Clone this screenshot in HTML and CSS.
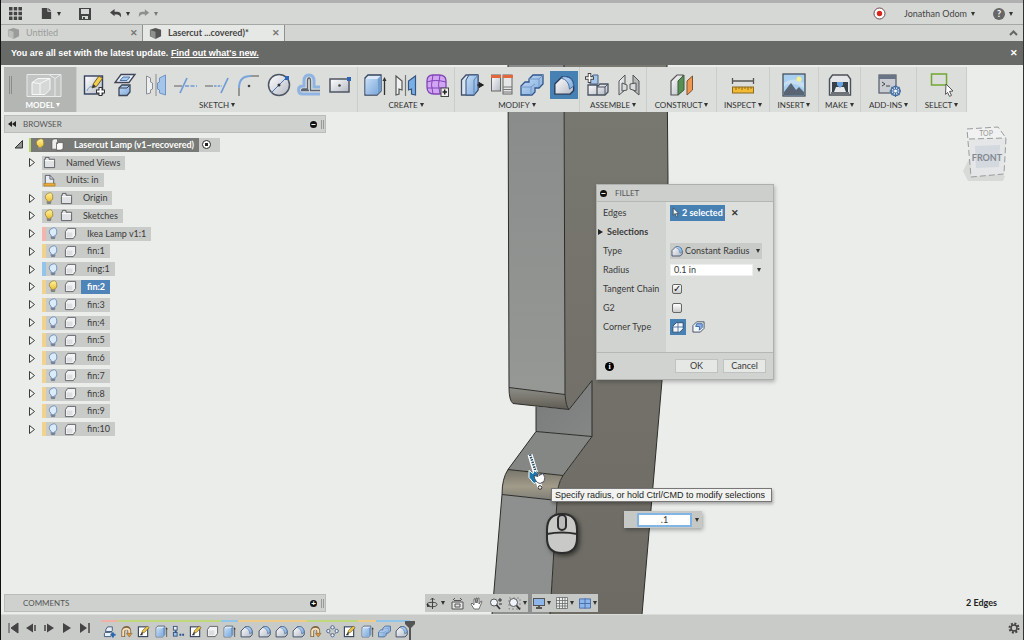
FILE: index.html
```
<!DOCTYPE html>
<html lang="en">
<head>
<meta charset="utf-8">
<title>Lasercut Lamp</title>
<link rel="stylesheet" href="styles.css">
</head>
<body>
<svg class="defs" aria-hidden="true">
<defs>
<linearGradient id="gb" x1="0" y1="0" x2="1" y2="1"><stop offset="0" stop-color="#c4dcf5"/><stop offset="1" stop-color="#7faadc"/></linearGradient>
<linearGradient id="gw" x1="0" y1="0" x2="1" y2="1"><stop offset="0" stop-color="#ffffff"/><stop offset="1" stop-color="#b4b9c4"/></linearGradient>
<linearGradient id="gy" x1="0" y1="0" x2="0" y2="1"><stop offset="0" stop-color="#fff3a0"/><stop offset="1" stop-color="#e9b820"/></linearGradient>
</defs>
<symbol id="i-sketch" viewBox="0 0 24 24"><rect x="2.500" y="3" width="18" height="18" fill="url(#gw)" stroke="#33415e" stroke-width="1.400"/><path d="M5 18q2-6 7-4" fill="none" stroke="#6f9fd6"/><path d="M10 15l1.500-4.500L17 3l3.500 2.500-6 8z" fill="#f2cf4a" stroke="#6b5a2e"/><path d="M10 15l1.500-4 2.500 2.500z" fill="#3c3c3c"/><path d="M18.500 14v9M14 18.500h9" stroke="#333" stroke-width="4"/><path d="M18.500 15v7M15 18.500h7" stroke="#fff" stroke-width="2"/></symbol>
<symbol id="i-loft" viewBox="0 0 24 24"><path d="M8 1.500h14l-6 8H2z" fill="#eef2f8" stroke="#3d4557" stroke-width="1.300"/><path d="M10 4h7l-3 3.500H7z" fill="#a9caee" stroke="#4a76ad"/><path d="M6 15l3-3h8v7l-3 3.500H6z" fill="url(#gb)" stroke="#3d4557" stroke-width="1.300"/><path d="M6 15h8l3-3" fill="none" stroke="#3d4557"/></symbol>
<symbol id="i-mirror" viewBox="0 0 24 24"><path d="M2.500 3l4 2v4l2 1v6l-2 1v3l-4 1z" fill="#eceef0" stroke="#8b8f94"/><path d="M12 1v22" stroke="#999" stroke-width="1.200"/><path d="M21.500 2l-6 3v4l-2 1v6l2 1v3l6 2z" fill="#a5c4e9" stroke="#6d94c4"/></symbol>
<symbol id="i-trim" viewBox="0 0 24 24"><path d="M0 13h8" stroke="#888" stroke-width="1.500"/><path d="M6 20L13 5" stroke="#6e9bd8" stroke-width="1.700"/><path d="M11 13h12" stroke="#6e9bd8" stroke-width="1.500" stroke-dasharray="4 1.500"/></symbol>
<symbol id="i-extend" viewBox="0 0 24 24"><path d="M0 13h8" stroke="#888" stroke-width="1.500"/><path d="M9 13h8" stroke="#6e9bd8" stroke-width="1.500" stroke-dasharray="2.500 1.200"/><path d="M16 20L23 5" stroke="#6e9bd8" stroke-width="1.700"/></symbol>
<symbol id="i-arc" viewBox="0 0 24 24"><path d="M3 23v-8" stroke="#777" stroke-width="1.400"/><path d="M3 15Q3 3 15 3" fill="none" stroke="#7aa5dd" stroke-width="2"/><path d="M15 3h8" stroke="#777" stroke-width="1.400"/><circle cx="13" cy="13" r="1.300" fill="#444"/></symbol>
<symbol id="i-circle" viewBox="0 0 24 24"><circle cx="12" cy="12" r="10.500" fill="url(#gw)" stroke="#4f5663" stroke-width="1.500"/><path d="M4 20L20 4" stroke="#4777b8"/><circle cx="12" cy="12" r="1.500" fill="#333"/><path d="M18 3h4v4h-4z" fill="#2d66b8"/></symbol>
<symbol id="i-offset" viewBox="0 0 24 24"><path d="M23 14h-6V8q0-6-5-6T7 8v5H6q-4.500 0-4.500 4T6 21h17" fill="none" stroke="#8fb4e2" stroke-width="3"/><path d="M23 17.500h-9.500V8q0-3-1.500-3t-1.500 3v8H6q-1.500 0-1.500 1.500H12" fill="none" stroke="#5b6370" stroke-width="1.300"/></symbol>
<symbol id="i-rect" viewBox="0 0 24 24"><rect x="2" y="6" width="19" height="13" fill="url(#gw)" stroke="#4f5663" stroke-width="1.500"/><circle cx="11.500" cy="12.500" r="1.300" fill="#444"/><path d="M19 4h4v4h-4z" fill="#2d66b8"/></symbol>
<symbol id="i-extrude" viewBox="0 0 24 24"><path d="M2 5l3-3h13v16l-4 4H2z" fill="#dce9f8" stroke="#34435e" stroke-width="1.300"/><path d="M2.500 6h12v15.500h-12z" fill="url(#gb)"/><path d="M14.500 6L18 2.500V18l-3.500 3.500z" fill="#6e9dd2"/><path d="M21.500 7v15" stroke="#333" stroke-width="1.300"/><path d="M19.500 8l2-4 2 4z" fill="#333"/></symbol>
<symbol id="i-sheet" viewBox="0 0 24 24"><path d="M2 3l6 5v9l-3-1v5l-3 1z" fill="#f1f2f3" stroke="#555" stroke-width="1.200"/><path d="M11.500 2v21" stroke="#777" stroke-width="1.200"/><path d="M21.500 3v19l-4-1v-5l-3 1V8z" fill="#79aee6" stroke="#35567e" stroke-width="1.200"/></symbol>
<symbol id="i-form" viewBox="0 0 24 24"><path d="M2 8q0-6 6-6h6q7 0 7 6v6q0 7-7 7H9q-7 0-7-7z" fill="#d2a4f4" stroke="#8045b4" stroke-width="1.300"/><path d="M2 9q8-3 19 0M2 15h19M8 2q-3 10 0 19M15 2q-3 10 0 19" fill="none" stroke="#8045b4"/><rect x="16" y="15" width="7.500" height="8.500" fill="#eee" stroke="#444"/><path d="M19.700 16.500v5M17.500 19h4.500" stroke="#222" stroke-width="1.500"/></symbol>
<symbol id="i-press" viewBox="0 0 24 24"><path d="M1.500 7L6 2h12v15l-4 5H1.500z" fill="#dbe6f3" stroke="#44516a" stroke-width="1.300"/><path d="M6 7l3-5h9v15l-4 5H6z" fill="url(#gb)" stroke="#34507a"/><path d="M14 7v15M14 7l4-5" stroke="#5d82b2"/><path d="M17 12h4M19 9.500l4.500 2.500-4.500 2.500z" fill="#222" stroke="#222"/></symbol>
<symbol id="i-param" viewBox="0 0 24 24"><rect x="1.500" y="2" width="9" height="16" fill="url(#gw)" stroke="#666"/><rect x="13" y="2" width="9" height="19" fill="#e5e6e7" stroke="#666"/><path d="M1 2h10v3H1zM13 2h10v3H13z" fill="#e2673c"/><path d="M13 14h9M13 16.500h9M13 19h9" stroke="#777"/></symbol>
<symbol id="i-combine" viewBox="0 0 24 24"><path d="M9 6l4-4h10v9l-4 4h-4v4l-3 3H1v-9l4-4h4z" fill="url(#gb)" stroke="#31568c" stroke-width="1.300"/><path d="M9 6h10l4-4M19 6v8M1 14h10l4-3M11 14v8" fill="none" stroke="#7297c6"/></symbol>
<symbol id="i-fillet" viewBox="0 0 24 24"><path d="M2 22V11l8-8h4q8 1 8.500 10v5l-4 4z" fill="url(#gw)" stroke="#293b58" stroke-width="1.500" stroke-linejoin="round"/><path d="M9 4.500L11 3h3q8 1 8.500 10L18 16.500Q17.500 6.500 9 4.500z" fill="url(#gb)" stroke="#3d6aa5"/></symbol>
<symbol id="i-newcomp" viewBox="0 0 24 24"><path d="M5 11V5l3-3h5v9z" fill="#a4c6ed" stroke="#4d617e"/><path d="M3 12h9v10H3zM12 14l3-3h8v8l-3 3h-8z" fill="url(#gw)" stroke="#4b5462" stroke-width="1.300"/><path d="M12 14h8v8M20 14l3-3" fill="none" stroke="#4b5462"/><path d="M4.500 0v10M0 5h9" stroke="#444" stroke-width="3.500"/><path d="M4.500 1v8M1 5h7" stroke="#fff" stroke-width="1.700"/></symbol>
<symbol id="i-joint" viewBox="0 0 24 24"><path d="M2 8l6-6v15l-6 5z" fill="url(#gw)" stroke="#555"/><path d="M22 8l-6-6v15l6 5z" fill="#b4b7ba" stroke="#555"/><path d="M5 10l5 2v5l-5 1zM19 10l-6 1v5l6 2z" fill="#d9dbdd" stroke="#555"/></symbol>
<symbol id="i-construct" viewBox="0 0 24 24"><path d="M1 8l6-6h6v14l-5 6H1z" fill="url(#gw)" stroke="#555" stroke-width="1.200"/><path d="M8 8l6-6v15l-6 5z" fill="#579052" stroke="#3d5c3a"/><path d="M17 8l5.500-5v14L17 22z" fill="#f29751" stroke="#7c5233"/></symbol>
<symbol id="i-inspect" viewBox="0 0 24 24"><path d="M1.500 5v6M22.500 5v6M2 8h20" stroke="#555" stroke-width="1.300"/><rect x="1.500" y="14" width="21" height="6" fill="#f2bb33" stroke="#8c6a21"/><path d="M5 14v3M8 14v2M11 14v3M14 14v2M17 14v3M20 14v2" stroke="#8c6a21"/></symbol>
<symbol id="i-insert" viewBox="0 0 24 24"><rect x="1" y="1" width="22" height="22" fill="#a9d0ef" stroke="#45505e" stroke-width="1.300"/><path d="M2 14q6-7 20 1v-5q-11-7-20 0z" fill="#dbeaf3" opacity=".6"/><path d="M2 19l7-9 5 7 3-3 5 5v3H2z" fill="#5a6574"/><circle cx="17" cy="6" r="2.500" fill="#f7f18d"/></symbol>
<symbol id="i-make" viewBox="0 0 24 24"><path d="M1.500 6l3-4h15l3 4v16h-21z" fill="#e4e6e8" stroke="#4c5158" stroke-width="1.400"/><path d="M4 9h16v10H4z" fill="#394149"/><path d="M6 19l2-5h8l2 5z" fill="#e6e8ea"/><path d="M9 9h6v3l-3 3-3-3z" fill="#6ba4e6"/><path d="M3 20h18" stroke="#6d7278" stroke-width="2"/></symbol>
<symbol id="i-addins" viewBox="0 0 24 24"><rect x="2" y="2" width="17" height="18" fill="#c9cdd3" stroke="#535a66" stroke-width="1.200"/><path d="M2 2h17v4H2z" fill="#687486"/><path d="M5 9l3 2-3 2M9 13h4" fill="none" stroke="#444"/><circle cx="18.500" cy="18" r="4.500" fill="#d7e5f6" stroke="#456e9f" stroke-width="1.500"/><path d="M18.500 12v12M12.500 18h12M14.500 14l8 8M22.500 14l-8 8" stroke="#456e9f" stroke-width="1.100"/><circle cx="18.500" cy="18" r="1.500" fill="#fff"/></symbol>
<symbol id="i-select" viewBox="0 0 24 24"><rect x="1.500" y="1" width="15" height="11" fill="none" stroke="#72a832" stroke-width="1.500"/><path d="M16 11l7 7-3.500.4 2 4-2 1-2-4-2 2z" fill="#fff" stroke="#555"/></symbol>
<symbol id="i-bulb" viewBox="0 0 12 14"><path d="M4 9Q1.500 7 2 4.500T6 1t4 3.500T8 9v3H4z" fill="url(#gy)" stroke="#997c2c" stroke-width=".8"/><path d="M4 10h4v3H4z" fill="#7e8287"/></symbol>
<symbol id="i-bulboff" viewBox="0 0 12 14"><path d="M4 9Q1.500 7 2 4.500T6 1t4 3.500T8 9v3H4z" fill="#dcebfa" stroke="#6287b8" stroke-width=".9"/><path d="M4 10h4v3H4z" fill="#76829a"/></symbol>
<symbol id="i-folder" viewBox="0 0 14 14"><path d="M1.500 12.500v-9h1v-2h4v2h6v9z" fill="#e0e2e4" stroke="#555b63"/><path d="M2 5h10" stroke="#fff"/></symbol>
<symbol id="i-body" viewBox="0 0 14 14"><path d="M1.500 5l2.500-3.500h8.500V9L10 12.500H1.500z" fill="#f1f2f3" stroke="#5d6268" stroke-linejoin="round"/><path d="M3 6h6v5H3z" fill="#dcdee0"/></symbol>
<symbol id="i-comp" viewBox="0 0 14 14"><path d="M1 3l2-2h4v4H6v7H1z" fill="#eee" stroke="#555" stroke-width=".7"/><path d="M6 7l2-2h5v6l-2 2H6z" fill="#fff" stroke="#555" stroke-width=".7"/></symbol>
<symbol id="i-units" viewBox="0 0 14 14"><path d="M2.500 12V1.500h5l4 4V12z" fill="#e9ecf0" stroke="#535c68"/><path d="M7.500 1.500v4h4" fill="none" stroke="#535c68"/><path d="M1 10h12v3H1z" fill="#e8a936" stroke="#9a6c1f" stroke-width=".6"/></symbol>
<symbol id="i-tri" viewBox="0 0 8 10"><path d="M1.500 1v8l5-4z" fill="#f3f3f3" stroke="#3b3b3b"/></symbol>
<symbol id="i-cube" viewBox="0 0 14 14"><path d="M1 3l6-2 6 2v7l-6 3-6-3z" fill="currentColor"/><path d="M1.500 3.300L7 5v8L1.500 10z" fill="#fff" opacity=".35"/></symbol>
<symbol id="i-cursor" viewBox="0 0 8 12"><path d="M1 1v8l2-2 1.500 4 1.500-.7L4.500 7H7z" fill="#eef3f8" stroke="#333" stroke-width=".7"/></symbol>
<symbol id="i-snake" viewBox="0 0 14 14"><path d="M3.500 13V6q1-3 3.500-3t3 3v3" fill="none" stroke="#7a633f" stroke-width="4"/><path d="M3.500 12V6q1-2 3.500-2t3 2v3" fill="none" stroke="#f6dfba" stroke-width="2.200"/><path d="M7 9h6l-3 4z" fill="#e59232" stroke="#7a633f" stroke-width=".6"/></symbol>
<symbol id="i-pattern" viewBox="0 0 14 14"><g fill="#e8eff7" stroke="#46648f"><circle cx="7" cy="2.500" r="1.800"/><circle cx="2.500" cy="6.500" r="1.800"/><circle cx="11.500" cy="6.500" r="1.800"/><circle cx="7" cy="11" r="1.800"/></g><path d="M4 4l1-1M9 3l1 1M4 9l1 1M10 9l-1 1" stroke="#444"/></symbol>
<symbol id="i-pen" viewBox="0 0 14 14"><rect x="1.500" y="2" width="10" height="10.500" fill="#fff" stroke="#34435e" stroke-width="1.200"/><path d="M5 9l1-3 5-5 2 2-5 5z" fill="#efc548" stroke="#685528" stroke-width=".7"/><path d="M3 11l3-4v4z" fill="#333"/></symbol>
<symbol id="i-rigid" viewBox="0 0 14 14"><rect x="1.500" y="1.500" width="4" height="4" fill="#e6eef8" stroke="#3c5577"/><rect x="1.500" y="8" width="4" height="4" fill="#9dc3ee" stroke="#3c5577"/><path d="M8 10.500h2M11 10.500h2M4 6v2" stroke="#24548e" stroke-width="2"/></symbol>
<symbol id="i-insertcomp" viewBox="0 0 14 14"><path d="M3 5l2-3h5v4L8 8H3zM1.500 9l2-2h6v4l-1 1.500h-7z" fill="#e9f0f8" stroke="#3c5577"/><path d="M8 10.500h5.500M10.700 8v5.500" stroke="#2468b0" stroke-width="2"/></symbol>
<symbol id="i-doc" viewBox="0 0 14 14"><path d="M2 1h6v4h4v8H2z" fill="#444"/><path d="M9 1l3 3H9z" fill="#444"/></symbol>
<symbol id="i-undo" viewBox="0 0 14 12"><path d="M1 5l5-4v3h3q4 0 4 4v2q-2-3-4-3H6v2z" fill="currentColor"/></symbol>
<symbol id="i-redo" viewBox="0 0 14 12"><path d="M13 5L8 1v3H5Q1 4 1 8v2q2-3 4-3h3v2z" fill="currentColor"/></symbol>
</svg>

<header class="topbar">
  <button class="tb" aria-label="Data panel"><svg width="13" height="13" viewBox="0 0 13 13"><path d="M0 0h3.500v3.500H0zM4.700 0h3.500v3.500H4.700zM9.400 0H13v3.500H9.400zM0 4.700h3.500v3.500H0zM4.700 4.700h3.500v3.500H4.700zM9.400 4.700H13v3.500H9.400zM0 9.400h3.500V13H0zM4.700 9.400h3.500V13H4.700zM9.400 9.400H13V13H9.400z" fill="#444"/></svg></button>
  <button class="tb" aria-label="File"><svg width="13" height="13"><use href="#i-doc"/></svg><i class="caret"></i></button>
  <button class="tb" aria-label="Save"><svg width="12" height="12" viewBox="0 0 12 12"><path d="M0 0h12v12H0z" fill="#444"/><path d="M2 1h8v5H2zM3 8h6v3H3z" fill="#d6d8d6"/><path d="M4 9h2v2H4z" fill="#444"/></svg></button>
  <button class="tb" aria-label="Undo"><svg width="13" height="11"><use href="#i-undo"/></svg><i class="caret"></i></button>
  <button class="tb redo" aria-label="Redo"><svg width="12" height="11"><use href="#i-redo"/></svg><i class="caret"></i></button>
  <span class="grow"></span>
  <button class="tb rec" aria-label="Record"><svg width="13" height="13" viewBox="0 0 13 13"><circle cx="6.500" cy="6.500" r="5.500" fill="#fff" stroke="#6b4747"/><circle cx="6.500" cy="6.500" r="2.700" fill="#d7261c"/></svg></button>
  <button class="tb user">Jonathan Odom <i class="caret"></i></button>
  <button class="tb" aria-label="Help"><span class="help">?</span><i class="caret"></i></button>
</header>

<nav class="tabs" aria-label="Documents">
  <div class="tab dim"><svg width="13" height="13"><use href="#i-cube"/></svg><a href="#untitled">Untitled</a><button class="x" aria-label="Close Untitled">✕</button></div>
  <div class="tab on"><svg width="13" height="13"><use href="#i-cube"/></svg><a href="#lamp">Lasercut ...covered)*</a><button class="x" aria-label="Close Lasercut">✕</button></div>
  <span class="grow"></span>
  <button class="x up" aria-label="Collapse"><svg width="9" height="6" viewBox="0 0 9 6"><path d="M1 5l3.500-3.500L8 5" fill="none" stroke="#666" stroke-width="2"/></svg></button>
</nav>

<div class="notice"><span>You are all set with the latest update. <a href="#new">Find out what's new.</a></span><button aria-label="Dismiss">✕</button></div>

<main class="canvas">
  <svg class="scene" viewBox="0 64 1024 550" preserveAspectRatio="xMidYMid slice" aria-hidden="true">
    <defs>
      <linearGradient id="f1" x1="0" y1="0" x2="0" y2="1"><stop offset="0" stop-color="#888a89"/><stop offset="1" stop-color="#969896"/></linearGradient>
      <linearGradient id="f2" x1="0" y1="0" x2="0" y2="1"><stop offset="0" stop-color="#8d8d89"/><stop offset=".5" stop-color="#77756c"/><stop offset="1" stop-color="#5c5a52"/></linearGradient>
      <linearGradient id="f3" x1="0" y1="0" x2="0" y2="1"><stop offset="0" stop-color="#77756b"/><stop offset=".55" stop-color="#a29b89"/><stop offset="1" stop-color="#7c7c76"/></linearGradient>
      <linearGradient id="f4" x1="0" y1="0" x2="1" y2="1"><stop offset="0" stop-color="#777b7b"/><stop offset="1" stop-color="#858785"/></linearGradient>
      <linearGradient id="f5" x1="0" y1="0" x2="0" y2="1"><stop offset="0" stop-color="#7a7971"/><stop offset="1" stop-color="#6d6b64"/></linearGradient>
    </defs>
    <path d="M564 64H667L668 180L662 380L642 614H550L557 500Q557 484 563 475L592 436V380L569 409Q566 406 565 394Z" fill="url(#f5)"/>
    <path d="M508 64H564L565 394L509 387Z" fill="url(#f1)"/>
    <path d="M509 387L565 394Q566 406 569 409L513 403Q509 400 509 387Z" fill="url(#f2)"/>
    <path d="M536 406L569 409L592 380V436L536 431Z" fill="url(#f4)"/>
    <path d="M536 431L592 436L563 475L508 469Z" fill="#848784"/>
    <path d="M508 469L563 475Q557 484 557 500L502 494Q502 478 508 469Z" fill="url(#f3)"/>
    <path d="M502 494L557 500L550 614H492Z" fill="#8d908e"/>
    <path d="M508 64L509 387Q509 400 513 403L569 409L592 380V436L563 475Q557 484 557 500L550 614M564 64L565 394Q566 406 569 409M509 387L565 394M536 406V431L592 436M536 431L508 469Q502 478 502 494L492 614M508 469L563 475M502 494L557 500M667 64L668 180L662 380L642 614" fill="none" stroke="#2d2d2a"/>
    <path d="M530 454L540 487" stroke="#fff" stroke-width="5"/><path d="M530 454L536 472" stroke="#2d5063" stroke-width="2.500" stroke-dasharray="1.500 1"/>
    <path d="M529 470l4 3 1-3 5 3-1 8-4 2-5-6z" fill="#1c78ab" stroke="#fff"/><path d="M534 475l4 1-1-4q2-1 2 3l4-2q3 4 1 8l-4 2q-5-1-6-8z" fill="#fff" stroke="#334" stroke-width=".8"/><circle cx="540" cy="487" r="1.800" fill="#eee" stroke="#333"/>
  </svg>

  <div class="toolbar" role="toolbar">
    <div class="grp model"><div class="icons"><i class="grip"></i><svg class="ws" viewBox="0 0 36 24"><path d="M1 1h34v22H1z" fill="#c3c5c4" stroke="#e8e9e8"/><path d="M23 1l6 4v18M29 5l6-4" fill="none" stroke="#e8e9e8"/><path d="M6 9l6-4h12v11l-5 5H6z" fill="#d6d8d7" stroke="#f7f7f7"/><path d="M6 9l8 1v11M14 10l10-5" fill="none" stroke="#f7f7f7"/></svg></div><button class="lab">MODEL<i class="caret"></i></button></div>
    <div class="grp"><div class="icons"><svg><use href="#i-sketch"/></svg><svg><use href="#i-loft"/></svg><svg><use href="#i-mirror"/></svg><svg><use href="#i-trim"/></svg><svg><use href="#i-extend"/></svg><svg><use href="#i-arc"/></svg><svg><use href="#i-circle"/></svg><svg><use href="#i-offset"/></svg><svg><use href="#i-rect"/></svg></div><button class="lab">SKETCH<i class="caret"></i></button></div>
    <div class="grp"><div class="icons"><svg><use href="#i-extrude"/></svg><svg><use href="#i-sheet"/></svg><svg><use href="#i-form"/></svg></div><button class="lab">CREATE<i class="caret"></i></button></div>
    <div class="grp"><div class="icons"><svg><use href="#i-press"/></svg><svg><use href="#i-param"/></svg><svg><use href="#i-combine"/></svg><svg class="active"><use href="#i-fillet"/></svg></div><button class="lab">MODIFY<i class="caret"></i></button></div>
    <div class="grp"><div class="icons"><svg><use href="#i-newcomp"/></svg><svg><use href="#i-joint"/></svg></div><button class="lab">ASSEMBLE<i class="caret"></i></button></div>
    <div class="grp one"><div class="icons"><svg><use href="#i-construct"/></svg></div><button class="lab">CONSTRUCT<i class="caret"></i></button></div>
    <div class="grp one"><div class="icons"><svg><use href="#i-inspect"/></svg></div><button class="lab">INSPECT<i class="caret"></i></button></div>
    <div class="grp one"><div class="icons"><svg><use href="#i-insert"/></svg></div><button class="lab">INSERT<i class="caret"></i></button></div>
    <div class="grp one"><div class="icons"><svg><use href="#i-make"/></svg></div><button class="lab">MAKE<i class="caret"></i></button></div>
    <div class="grp one"><div class="icons"><svg><use href="#i-addins"/></svg></div><button class="lab">ADD-INS<i class="caret"></i></button></div>
    <div class="grp one"><div class="icons"><svg><use href="#i-select"/></svg></div><button class="lab">SELECT<i class="caret"></i></button></div>
  </div>

  <section class="panel"><svg width="8" height="6" viewBox="0 0 8 6"><path d="M4 0v6L0 3zM8 0v6L4 3z" fill="#222"/></svg><h2>BROWSER</h2><button class="dot" aria-label="Minimize">−</button><i class="edge"></i></section>

  <ul class="tree">
    <li class="root"><svg class="tw" viewBox="0 0 8 10"><path d="M7.500 1v7.500H0z" fill="#8d8f8d" stroke="#333"/></svg><div class="chip rootchip"><svg class="bulb"><use href="#i-bulb"/></svg><svg class="ic"><use href="#i-comp"/></svg><b>Lasercut Lamp (v1~recovered)</b></div><label class="radio"><input type="radio" checked aria-label="Activate component"></label></li>
    <li><svg class="tw"><use href="#i-tri"/></svg><div class="chip"><svg class="ic"><use href="#i-folder"/></svg><span>Named Views</span></div></li>
    <li><i class="tw"></i><div class="chip"><svg class="ic"><use href="#i-units"/></svg><span>Units: in</span></div></li>
    <li><svg class="tw"><use href="#i-tri"/></svg><div class="chip"><svg class="bulb"><use href="#i-bulb"/></svg><svg class="ic"><use href="#i-folder"/></svg><span>Origin</span></div></li>
    <li><svg class="tw"><use href="#i-tri"/></svg><div class="chip"><svg class="bulb"><use href="#i-bulb"/></svg><svg class="ic"><use href="#i-folder"/></svg><span>Sketches</span></div></li>
    <li><svg class="tw"><use href="#i-tri"/></svg><div class="chip bar pink"><svg class="bulb"><use href="#i-bulboff"/></svg><svg class="ic"><use href="#i-body"/></svg><span>Ikea Lamp v1:1</span></div></li>
    <li><svg class="tw"><use href="#i-tri"/></svg><div class="chip bar"><svg class="bulb"><use href="#i-bulboff"/></svg><svg class="ic"><use href="#i-body"/></svg><span>fin:1</span></div></li>
    <li><svg class="tw"><use href="#i-tri"/></svg><div class="chip bar blue"><svg class="bulb"><use href="#i-bulboff"/></svg><svg class="ic"><use href="#i-body"/></svg><span>ring:1</span></div></li>
    <li><svg class="tw"><use href="#i-tri"/></svg><div class="chip bar sel"><svg class="bulb"><use href="#i-bulb"/></svg><svg class="ic"><use href="#i-body"/></svg><span>fin:2</span></div></li>
    <li><svg class="tw"><use href="#i-tri"/></svg><div class="chip bar"><svg class="bulb"><use href="#i-bulboff"/></svg><svg class="ic"><use href="#i-body"/></svg><span>fin:3</span></div></li>
    <li><svg class="tw"><use href="#i-tri"/></svg><div class="chip bar"><svg class="bulb"><use href="#i-bulboff"/></svg><svg class="ic"><use href="#i-body"/></svg><span>fin:4</span></div></li>
    <li><svg class="tw"><use href="#i-tri"/></svg><div class="chip bar"><svg class="bulb"><use href="#i-bulboff"/></svg><svg class="ic"><use href="#i-body"/></svg><span>fin:5</span></div></li>
    <li><svg class="tw"><use href="#i-tri"/></svg><div class="chip bar"><svg class="bulb"><use href="#i-bulboff"/></svg><svg class="ic"><use href="#i-body"/></svg><span>fin:6</span></div></li>
    <li><svg class="tw"><use href="#i-tri"/></svg><div class="chip bar"><svg class="bulb"><use href="#i-bulboff"/></svg><svg class="ic"><use href="#i-body"/></svg><span>fin:7</span></div></li>
    <li><svg class="tw"><use href="#i-tri"/></svg><div class="chip bar"><svg class="bulb"><use href="#i-bulboff"/></svg><svg class="ic"><use href="#i-body"/></svg><span>fin:8</span></div></li>
    <li><svg class="tw"><use href="#i-tri"/></svg><div class="chip bar"><svg class="bulb"><use href="#i-bulboff"/></svg><svg class="ic"><use href="#i-body"/></svg><span>fin:9</span></div></li>
    <li><svg class="tw"><use href="#i-tri"/></svg><div class="chip bar"><svg class="bulb"><use href="#i-bulboff"/></svg><svg class="ic"><use href="#i-body"/></svg><span>fin:10</span></div></li>
  </ul>

  <div class="bottom">
    <section class="panel comments"><h2>COMMENTS</h2><button class="dot" aria-label="Add comment">+</button><i class="edge"></i></section>
    <div class="nav">
      <div class="navgrp">
        <button aria-label="Orbit"><svg width="13" height="13" viewBox="0 0 13 13"><ellipse cx="6" cy="7.500" rx="5" ry="2.200" fill="none" stroke="#444"/><path d="M6.500 1v11M4.500 3l2-2 2 2" fill="none" stroke="#444"/><path d="M1 6v4l3-1z" fill="#333"/></svg><i class="caret"></i></button>
        <button aria-label="Look at"><svg width="13" height="13" viewBox="0 0 13 13"><path d="M1 5h11v7H1zM4 7h5v3H4zM2 3l2-2M11 3L9 1M3 3.500h7" fill="#e4e5e4" stroke="#555"/></svg></button>
        <button aria-label="Pan"><svg width="13" height="13" viewBox="0 0 13 13"><path d="M4 12L1 7l1-1 2 2V2l1-.500L6 6V1h1v5l1-5h1v6l2-3 1 .500-2 5-1 2.500z" fill="#fff" stroke="#555" stroke-width=".8"/></svg></button>
        <button aria-label="Zoom"><svg width="13" height="13" viewBox="0 0 13 13"><circle cx="5" cy="5.500" r="3.500" fill="#eef4fa" stroke="#555"/><path d="M7.500 8l3.500 4" stroke="#333" stroke-width="1.700"/><path d="M9 3h4M11 1v4M10 7h3" stroke="#333"/></svg></button>
        <button aria-label="Fit"><svg width="13" height="13" viewBox="0 0 13 13"><path d="M1 1h11v11H1z" fill="none" stroke="#888" stroke-dasharray="2"/><circle cx="5.500" cy="5.500" r="4" fill="#eef4fa" stroke="#555"/><path d="M8.500 8.500l3.500 4" stroke="#333" stroke-width="1.700"/></svg><i class="caret"></i></button>
      </div>
      <div class="navgrp tight">
        <button aria-label="Display"><svg width="12" height="12" viewBox="0 0 12 12"><rect x=".5" y="1.500" width="11" height="7" fill="#8db6ea" stroke="#555"/><path d="M3 11h6M6 8v3" stroke="#555" stroke-width="2"/></svg><i class="caret"></i></button>
        <button aria-label="Grid"><svg width="12" height="12" viewBox="0 0 12 12"><path d="M.5.5h11v11H.5zM3.500 0v12M6.500 0v12M9 0v12M0 3.500h12M0 6.500h12M0 9h12" fill="#eceded" stroke="#6b6b6b" stroke-width=".8"/></svg><i class="caret"></i></button>
        <button aria-label="Viewports"><svg width="12" height="11" viewBox="0 0 13 11"><path d="M.5.500h12v10H.5zM6.500 0v11M0 5.500h13" fill="#8db6ea" stroke="#456ca6"/></svg><i class="caret"></i></button>
      </div>
    </div>
    <span class="grow"></span>
    <output class="count">2 Edges</output>
  </div>

  <form class="dialog" onsubmit="return false">
    <div class="dhead"><button type="button" class="dot" aria-label="Collapse">−</button><h2>FILLET</h2></div>
    <div class="dbody">
      <span>Edges</span><div class="cell"><button type="button" class="pick"><svg width="8" height="11"><use href="#i-cursor"/></svg>2 selected</button><button type="button" class="clear" aria-label="Clear">✕</button></div>
      <span class="selz"><svg width="5" height="6" viewBox="0 0 5 6"><path d="M0 0v6l5-3z" fill="#222"/></svg><b>Selections</b></span><div class="cell"></div>
      <label for="type">Type</label><div class="cell"><div class="drop"><svg width="12" height="12"><use href="#i-fillet"/></svg><select id="type"><option>Constant Radius</option></select><i class="caret"></i></div></div>
      <label for="radius">Radius</label><div class="cell"><input id="radius" class="txt" value="0.1 in"><i class="caret"></i></div>
      <label for="tc">Tangent Chain</label><div class="cell"><input id="tc" type="checkbox" checked></div>
      <label for="g2">G2</label><div class="cell"><input id="g2" type="checkbox"></div>
      <span>Corner Type</span><div class="cell"><button type="button" class="ct on" aria-label="Rolling ball"><svg width="12" height="12" viewBox="0 0 14 14"><path d="M1 6l4-4h8v7l-4 4H1z" fill="#f3f6fa" stroke="#2a4569"/><path d="M1 7h12M7 2v11" stroke="#456d9e"/></svg></button><button type="button" class="ct" aria-label="Setback"><svg width="13" height="13" viewBox="0 0 14 14"><path d="M1 6l4-4h8v7l-4 4H1z" fill="#f3f6fa" stroke="#3f4a5c"/><path d="M5 4h6v4l-3 3V7H4z" fill="#88b3e9" stroke="#3c66a0"/></svg></button></div>
    </div>
    <div class="dfoot"><span class="info">i</span><span class="grow"></span><button>OK</button><button type="button">Cancel</button></div>
  </form>

  <div class="tip" role="tooltip">Specify radius, or hold Ctrl/CMD to modify selections</div>
  <div class="value"><input value=".1" aria-label="Radius value"><i class="caret"></i></div>
  <svg class="mouse" viewBox="0 0 36 46" aria-hidden="true"><path d="M3 19Q3 3 18 3t15 16v8q0 15-15 15T3 27z" fill="#c9cac8" stroke="#2c2c2c" stroke-width="2"/><path d="M3 23q15-3 30 0" fill="none" stroke="#2c2c2c" stroke-width="2"/><rect x="14" y="4" width="8" height="15" rx="4" fill="#bbb" stroke="#2c2c2c" stroke-width="2"/></svg>
  <svg class="cube" viewBox="0 0 50 64" role="img" aria-label="View cube"><path d="M2 50l6-12 36 17-2 5H7z" fill="#cfd1cf" opacity=".7"/><path d="M6 8l31-2 8 11-37 1z" fill="#f0f1f0"/><path d="M8 18l37-1-2 36-33 3z" fill="#e4e6e7"/><path d="M6 8l31-2 8 11-2 36-33 3L6 8zM8 18l37-1" fill="none" stroke="#999c9e" stroke-dasharray="6 3"/><path d="M14 25l25-1-1 22-23 1z" fill="#d4d8df"/><text x="26" y="40" class="cfront">FRONT</text><text x="25" y="15" class="ctop">TOP</text></svg>
</main>

<footer class="timeline">
  <div class="play">
    <button aria-label="Start"><svg viewBox="0 0 12 12"><path d="M2 1v10M11 1v10L4 6z" fill="#444" stroke="#444"/></svg></button>
    <button aria-label="Back"><svg viewBox="0 0 12 12"><path d="M8 1.500v9L1 6z" fill="#444"/><path d="M10 3v6" stroke="#444" stroke-width="1.500"/></svg></button>
    <button aria-label="Forward"><svg viewBox="0 0 12 12"><path d="M4 1.500v9L11 6z" fill="#444"/><path d="M2 3v6" stroke="#444" stroke-width="1.500"/></svg></button>
    <button aria-label="Play"><svg viewBox="0 0 12 12"><path d="M2 1v10l8-5z" fill="#444"/></svg></button>
    <button aria-label="End"><svg viewBox="0 0 12 12"><path d="M1 1v10l7-5z" fill="#444"/><path d="M10 1v10" stroke="#444" stroke-width="1.500"/></svg></button>
  </div>
  <div class="feats">
    <i class="p"><svg><use href="#i-insertcomp"/></svg></i><i class="g"><svg><use href="#i-snake"/></svg></i><i class="g"><svg><use href="#i-pen"/></svg></i><i class="g"><svg><use href="#i-extrude"/></svg></i><i class="g"><svg><use href="#i-rigid"/></svg></i><i class="g"><svg><use href="#i-pen"/></svg></i><i class="g"><svg><use href="#i-body"/></svg></i><i class="b"><svg><use href="#i-extrude"/></svg></i><i class="y"><svg><use href="#i-fillet"/></svg></i><i class="y"><svg><use href="#i-fillet"/></svg></i><i class="y"><svg><use href="#i-fillet"/></svg></i><i class="y"><svg><use href="#i-fillet"/></svg></i><i class="g"><svg><use href="#i-snake"/></svg></i><i class="g"><svg><use href="#i-pattern"/></svg></i><i class="g"><svg><use href="#i-pen"/></svg></i><i class="y"><svg><use href="#i-extrude"/></svg></i><i class="b"><svg><use href="#i-combine"/></svg></i><i class="b"><svg><use href="#i-fillet"/></svg></i>
    <svg class="marker" viewBox="0 0 10 20"><path d="M0 0h10v3L6 7v13H4V7L0 3z" fill="#555"/></svg>
  </div>
  <span class="grow"></span>
  <button class="gear" aria-label="Settings"><svg width="12" height="12" viewBox="0 0 12 12"><circle cx="6" cy="6" r="4.500" fill="none" stroke="#444" stroke-width="2" stroke-dasharray="2 1.500"/><circle cx="6" cy="6" r="3" fill="none" stroke="#444" stroke-width="1.500"/></svg></button>
</footer>
</body>
</html>
```

FILE: styles.css
```
* { box-sizing: border-box; }
body {
  margin: 0; height: 100vh; display: flex; flex-direction: column; overflow: hidden;
  font: 9px/12px Lato, "Noto Sans", sans-serif; color: #3a3a3a; background: #ebedeb;
  border-left: 1px solid #111; border-right: 1px solid #333;
}
button { font: inherit; color: inherit; background: none; border: 0; padding: 0; display: flex; align-items: center; }
a { color: inherit; text-decoration: none; }
h2 { margin: 0; font-size: 8px; font-weight: 400; }
svg { flex: none; display: block; }
.defs { position: absolute; width: 0; height: 0; }
.grow { flex: 1; }
.caret { width: 0; height: 0; border: 2px solid transparent; border-top: 4px solid #333; border-bottom: 0; flex: none; }

.topbar { display: flex; align-items: center; height: 25px; border-top: 3px solid #afb0af; border-bottom: 1px solid #a5a7a5; background: #d6d8d6; padding: 0 10px 0 8px; gap: 18px; }
.tb { gap: 4px; color: #444; }
.tb + .redo { margin-left: -10px; }
.redo { color: #8d8f8d; }
.redo .caret { border-top-color: #777; }
.help { width: 12px; height: 12px; border-radius: 50%; background: #666; color: #fff; font-weight: 700; text-align: center; }

.tabs { display: flex; height: 16px; background: #d3d5d2; }
.tab { display: flex; align-items: center; gap: 6px; width: 142px; padding: 0 4px 0 6px; border-right: 1px solid #8f918f; color: #555; }
.tab a { flex: 1; font-weight: 700; white-space: nowrap; }
.tab.dim { color: #9a9c9a; }
.tab.dim a { font-weight: 400; }
.tab.on { background: #e6e8e5; }
.tab.on a { color: #444; }
.x { color: #777; font-weight: 700; }
.up { padding: 0 5px; }

.notice { display: flex; align-items: center; justify-content: space-between; height: 24px; padding: 0 5px 0 10px; background: #686a67; color: #fff; font: 700 9px/12px "Liberation Sans", Arial, sans-serif; }
.notice a { text-decoration: underline; }

.canvas { position: relative; flex: 1; min-height: 0; display: flex; flex-direction: column; align-items: flex-start; padding: 2px 0 2px 3px; background: #ebedeb; }
.scene { position: absolute; top: 0; left: -1px; width: calc(100% + 2px); height: 100%; }

.toolbar { position: relative; display: grid; grid-template-columns: 73px 281px 97px 125px 67px 70px 53px 49px 42px 56px 50px; height: 45px; background: #dcdedb; }
.grp { display: flex; flex-direction: column; align-items: center; justify-content: space-between; padding: 4px 5px 1px; border-right: 1px solid #cbcdca; }
.icons { display: flex; align-items: center; justify-content: space-between; width: 100%; height: 28px; }
.icons svg { width: 24px; height: 24px; }
.one .icons { justify-content: center; }
.icons svg.active { width: 28px; height: 28px; padding: 3px; margin-right: -4px; background: #4780b3; }
.lab { gap: 2px; font-size: 8px; color: #333; white-space: nowrap; }
.model { background: #b4b6b4; }
.model .icons svg.ws { width: 36px; height: 25px; }
.model .icons { gap: 14px; justify-content: flex-start; }
.model .lab { color: #fff; font-weight: 700; padding-left: 6px; }
.model .caret { border-top-color: #fff; }
.grip { width: 3px; height: 18px; border: solid #8a8c8a; border-width: 0 1px; }

.panel { position: relative; display: flex; align-items: center; width: 322px; height: 18px; margin-top: 3px; padding: 0 1px 0 3px; gap: 7px; background: #cfd1ce; border: 1px solid #babcb9; }
.panel h2 { flex: 1; color: #555; }
.dot { width: 7px; height: 7px; border-radius: 50%; background: #111; color: #fff; font: 700 8px/7px "Liberation Sans", sans-serif; justify-content: center; }
.edge { width: 3px; height: 9px; margin-left: -3px; border: solid #999; border-width: 0 1px; }

.tree { position: relative; list-style: none; margin: 3px 0 0; padding: 0 0 0 24px; display: grid; grid-template-rows: repeat(17, 1fr); height: 302px; }
.tree li { display: flex; align-items: center; gap: 6px; }
.tw { width: 8px; height: 11px; flex: none; }
.chip { display: flex; align-items: center; height: 14px; background: #c9cbc8; gap: 4px; padding-left: 1px; white-space: nowrap; }
.bulb { width: 12px; height: 13px; }
.ic { width: 13px; height: 13px; }
.chip span, .chip b { padding: 0 5px 0 6px; line-height: 14px; }
.bulb + .ic { margin-left: 1px; }
.bar { border-left: 4px solid #f2d38e; }
.bar.pink { border-color: #f2b5b0; }
.bar.blue { border-color: #93c4ea; }
.sel span { background: #4f84b8; color: #fff; font-weight: 700; }
.root { margin-left: -13px; }
.rootchip { background: #777a76; border-left: 2px solid #b9d46b; color: #fff; }
.rootchip .bulb { margin-left: 2px; }
.radio { display: flex; align-items: center; height: 14px; margin-left: -6px; padding: 0 9px 0 3px; background: #c9cbc8; }
.radio input { appearance: none; margin: 0; width: 9px; height: 9px; border: 1px solid #333; border-radius: 50%; background: radial-gradient(#222 30%, #fff 40%); }

.bottom { position: relative; display: flex; align-items: center; align-self: stretch; margin-top: auto; }
.comments { margin: 0; padding-left: 18px; }
.nav { display: flex; gap: 4px; margin-left: 99px; }
.navgrp { display: flex; align-items: center; justify-content: space-between; height: 18px; padding: 0 1px; gap: 6px; background: #c6c8c5; }
.navgrp button { gap: 2px; }
.tight { gap: 5px; }
.count { margin-right: 26px; color: #222; font-weight: 700; }

.dialog { position: absolute; left: 595px; top: 119px; width: 178px; background: #d9dbd8; border: 1px solid #aeb0ad; box-shadow: 1px 2px 4px rgba(0,0,0,.25); }
.dhead { display: flex; align-items: center; gap: 8px; height: 17px; padding-left: 3px; background: #cdcfcc; border-bottom: 1px solid #b5b7b4; }
.dhead h2 { color: #555; }
.dbody { display: grid; grid-template-columns: 69px 1fr; grid-auto-rows: 19px; align-items: center; padding: 1px 0 16px; background: linear-gradient(90deg, #d1d3d0 69px, #dddfdc 69px); }
.dbody > label, .dbody > span { padding-left: 6px; white-space: nowrap; }
.dbody > .selz { display: flex; align-items: center; gap: 4px; padding-left: 1px; }
.cell { display: flex; align-items: center; padding-left: 4px; gap: 4px; }
.pick { height: 16px; padding: 0 2px; gap: 2px; background: #4780b3; color: #fff; font-weight: 700; white-space: nowrap; }
.clear { margin-left: 2px; font-weight: 700; }
.drop { display: flex; align-items: center; width: 92px; height: 16px; padding: 0 2px 0 1px; background: #c9cbc8; }
.drop select { appearance: none; flex: 1; min-width: 0; border: 0; margin: 0; padding: 0 0 0 2px; background: none; font: inherit; color: inherit; }
.txt { width: 83px; height: 12px; border: 1px solid #eee; padding: 0 3px; background: #fff; font: inherit; color: inherit; }
.cell input[type=checkbox] { appearance: none; width: 10px; height: 10px; margin: 0 2px; border: 1px solid #666; border-radius: 2px; background: linear-gradient(#fff, #ccc); }
.cell input[type=checkbox]:checked::after { content: "✓"; display: block; font: 700 10px/8px "DejaVu Sans", sans-serif; color: #111; }
.ct { width: 16px; height: 16px; justify-content: center; }
.ct.on { background: #4780b3; }
.dfoot { display: flex; align-items: center; gap: 5px; height: 27px; padding: 0 7px 0 8px; border-top: 1px solid #b5b7b4; background: #d1d3d0; }
.dfoot button { width: 43px; height: 14px; justify-content: center; border: 1px solid #c0c2bf; background: #e6e8e5; }
.info { width: 9px; height: 9px; border-radius: 50%; background: #000; color: #fff; font: 700 8px/9px "Liberation Serif", serif; text-align: center; }

.tip { position: absolute; left: 550px; top: 423px; padding: 0 6px 0 3px; border: 1px solid #777; background: #f2f3f0; color: #222; font: 9px/12px "Liberation Sans", Arial, sans-serif; white-space: nowrap; box-shadow: 1px 2px 3px rgba(0,0,0,.3); }
.value { position: absolute; left: 623px; top: 446px; display: flex; align-items: center; gap: 3px; height: 17px; padding: 0 3px 0 13px; background: #c6c8c5; box-shadow: 1px 2px 4px rgba(0,0,0,.3); }
.value input { width: 55px; height: 14px; border: 2px solid #83b4e6; background: #fff; padding: 0; text-align: center; font: inherit; color: inherit; }
.mouse { position: absolute; left: 543px; top: 446px; width: 36px; height: 46px; filter: drop-shadow(2px 2px 2px rgba(0,0,0,.5)); }
.cube { position: absolute; right: 12px; top: 56px; width: 50px; height: 64px; }
.cfront { font: 700 9px Lato, sans-serif; fill: #838991; text-anchor: middle; }
.ctop { font: 7px Lato, sans-serif; fill: #999; text-anchor: middle; }

.timeline { display: flex; align-items: center; height: 26px; padding: 0 3px 0 6px; background: #c9cbc8; border-top: 1px solid #dadcd9; }
.play { display: flex; gap: 6px; margin-right: 10px; }
.play svg { width: 12px; height: 12px; }
.feats { position: relative; display: grid; grid-template-columns: repeat(18, 1fr); width: 309px; align-self: stretch; padding-top: 5px; }
.feats i { display: flex; justify-content: center; padding-top: 3px; border-top: 2px solid #c0d87c; }
.feats i svg { width: 13px; height: 13px; }
.feats .p { border-color: #efb2a6; }
.feats .b { border-color: #93c4ea; }
.feats .y { border-color: #eecb86; }
.marker { position: absolute; right: -5px; top: 6px; width: 10px; height: 20px; }
```
